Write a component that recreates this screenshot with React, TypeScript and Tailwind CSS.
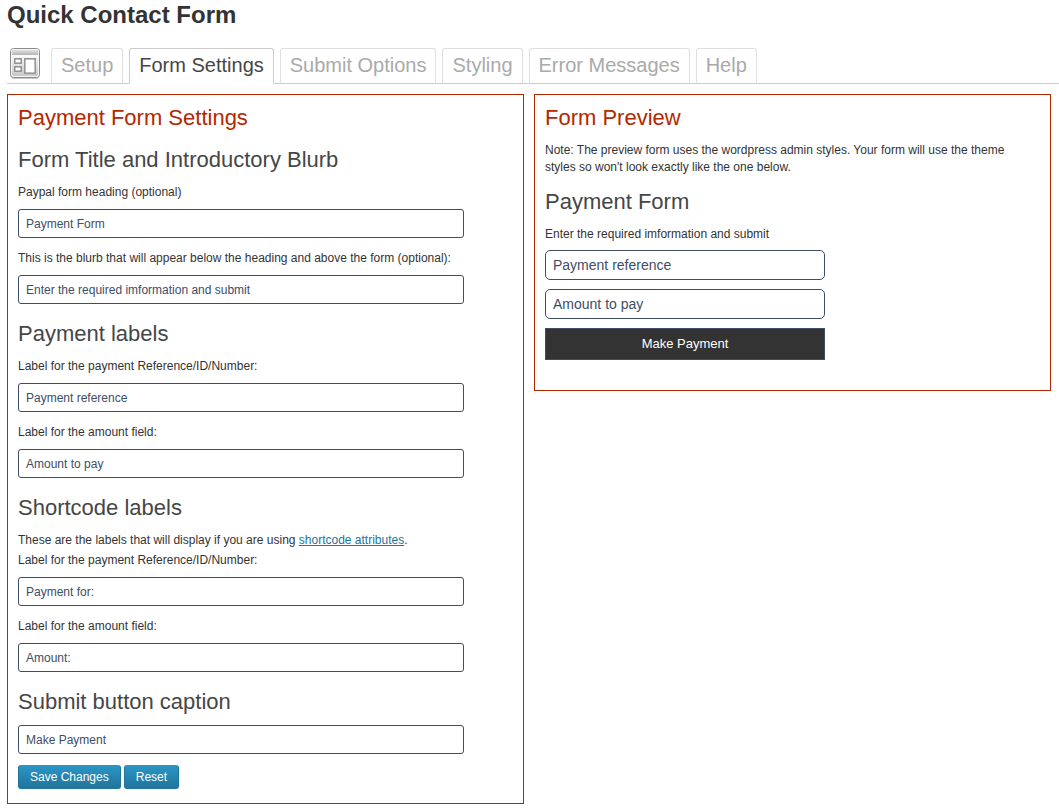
import type { ReactNode } from "react";

const tabs = ["Setup", "Form Settings", "Submit Options", "Styling", "Error Messages", "Help"];
const activeTab = "Form Settings";

function PageIcon() {
  return (
    <svg width="32" height="32" viewBox="0 0 32 32" aria-hidden="true" className="shrink-0">
      <defs>
        <linearGradient id="frame" x1="0" y1="0" x2="0" y2="1">
          <stop offset="0" stopColor="#ffffff" />
          <stop offset="0.3" stopColor="#f4f4f4" />
          <stop offset="1" stopColor="#c4c4c4" />
        </linearGradient>
        <linearGradient id="bar" x1="0" y1="0" x2="0" y2="1">
          <stop offset="0" stopColor="#e2e2e2" />
          <stop offset="1" stopColor="#b4b4b4" />
        </linearGradient>
      </defs>
      <rect x="3" y="30" width="26" height="1" rx="0.5" fill="#c8c8c8" />
      <rect x="1.5" y="0.5" width="29" height="29" rx="3" fill="url(#frame)" stroke="#8a8a8a" />
      <rect x="2.5" y="1.5" width="27" height="27" rx="2" fill="none" stroke="#f7f7f7" />
      <rect x="3" y="2" width="26" height="5" fill="url(#bar)" />
      <rect x="3" y="7" width="26" height="2" fill="#fafafa" />
      <g fill="#ffffff" stroke="#979797" strokeWidth="1.6">
        <rect x="5.8" y="10.8" width="6.4" height="4.4" />
        <rect x="5.8" y="18.8" width="6.4" height="4.4" />
        <rect x="15.8" y="10.8" width="10.4" height="14.4" />
      </g>
    </svg>
  );
}

function SectionTitle({ children }: { children: ReactNode }) {
  return <h2 className="mt-4 mb-[9px] text-[22px] leading-7 text-[#464646]">{children}</h2>;
}

function PanelTitle({ children }: { children: ReactNode }) {
  return <h2 className="-mb-0.5 text-[22px] leading-7 text-[#b52700]">{children}</h2>;
}

function Field({ id, label, value }: { id: string; label?: string; value: string }) {
  return (
    <div className="mb-[11px]">
      {label && (
        <label htmlFor={id} className="mb-2 block leading-[18px]">
          {label}
        </label>
      )}
      <input
        id={id}
        type="text"
        aria-label={label ? undefined : "Submit button caption"}
        defaultValue={value}
        className="block h-[29px] w-[90%] rounded-[3px] border border-[#404d66] bg-white px-[7px] text-[12px] text-[#404d66]"
      />
    </div>
  );
}

function PreviewInput({ label }: { label: string }) {
  return (
    <input
      type="text"
      aria-label={label}
      defaultValue={label}
      className="mb-[9px] block h-[30px] w-full rounded-[5px] border border-[#404d66] bg-white px-[7px] text-[14px] text-[#404d66]"
    />
  );
}

function BlueButton({ children, type }: { children: ReactNode; type: "submit" | "reset" }) {
  return (
    <button
      type={type}
      className="h-6 rounded-[3px] border border-[#21759b] border-t-[#2e96bd] bg-linear-to-b from-[#2a95c5] to-[#21759b] px-[11px] text-[12px] text-white"
    >
      {children}
    </button>
  );
}

export default function App() {
  return (
    <div className="bg-white pb-1.5 pl-[7px] font-['Liberation_Sans',Arial,sans-serif] text-[12px] text-[#333333]">
      <h1 className="pt-px text-[24px] leading-7 font-bold text-[#333333]">Quick Contact Form</h1>

      <nav className="mt-[19px] flex items-start border-b border-[#cccccc] pl-0.5">
        <PageIcon />
        <div className="-mb-px ml-2.5 flex gap-1.5">
          {tabs.map((tab) => (
            <a
              key={tab}
              href="#"
              aria-current={tab === activeTab ? "page" : undefined}
              className={
                tab === activeTab
                  ? "h-9 rounded-t-[3px] border border-[#cccccc] border-b-white bg-white px-[9px] text-[20px] leading-8 text-[#464646]"
                  : "h-9 rounded-t-[3px] border border-[#dfdfdf] border-b-[#cccccc] px-[9px] text-[20px] leading-8 text-[#aaaaaa]"
              }
            >
              {tab}
            </a>
          ))}
        </div>
      </nav>

      <main className="mt-2.5 mr-2 grid grid-cols-2 items-start gap-2.5">
        <section className="border border-[#b52700] px-2.5 pt-[9px] pb-3.5">
          <PanelTitle>Payment Form Settings</PanelTitle>
          <form onSubmit={(event) => event.preventDefault()}>
            <SectionTitle>Form Title and Introductory Blurb</SectionTitle>
            <Field id="heading" label="Paypal form heading (optional)" value="Payment Form" />
            <Field
              id="blurb"
              label="This is the blurb that will appear below the heading and above the form (optional):"
              value="Enter the required imformation and submit"
            />

            <SectionTitle>Payment labels</SectionTitle>
            <Field id="reference" label="Label for the payment Reference/ID/Number:" value="Payment reference" />
            <Field id="amount" label="Label for the amount field:" value="Amount to pay" />

            <SectionTitle>Shortcode labels</SectionTitle>
            <p className="mb-0.5 leading-[18px]">
              These are the labels that will display if you are using{" "}
              <a href="#" className="text-[#21759b] underline">
                shortcode attributes
              </a>
              .
            </p>
            <Field id="code-reference" label="Label for the payment Reference/ID/Number:" value="Payment for:" />
            <Field id="code-amount" label="Label for the amount field:" value="Amount:" />

            <SectionTitle>Submit button caption</SectionTitle>
            <Field id="caption" value="Make Payment" />

            <div className="flex gap-[3px]">
              <BlueButton type="submit">Save Changes</BlueButton>
              <BlueButton type="reset">Reset</BlueButton>
            </div>
          </form>
        </section>

        <section className="border border-[#b52700] px-2.5 pt-[9px] pb-[30px]">
          <PanelTitle>Form Preview</PanelTitle>
          <p className="mt-3 pr-4 leading-[17px]">
            Note: The preview form uses the wordpress admin styles. Your form will use the theme styles so won't look
            exactly like the one below.
          </p>
          <form className="-mt-1 w-[280px] max-w-full" onSubmit={(event) => event.preventDefault()}>
            <SectionTitle>Payment Form</SectionTitle>
            <p className="mb-[7px] leading-[18px]">Enter the required imformation and submit</p>
            <PreviewInput label="Payment reference" />
            <PreviewInput label="Amount to pay" />
            <button type="submit" className="block h-8 w-full border border-[#404d66] bg-[#333333] text-[13px] text-white">
              Make Payment
            </button>
          </form>
        </section>
      </main>
    </div>
  );
}
